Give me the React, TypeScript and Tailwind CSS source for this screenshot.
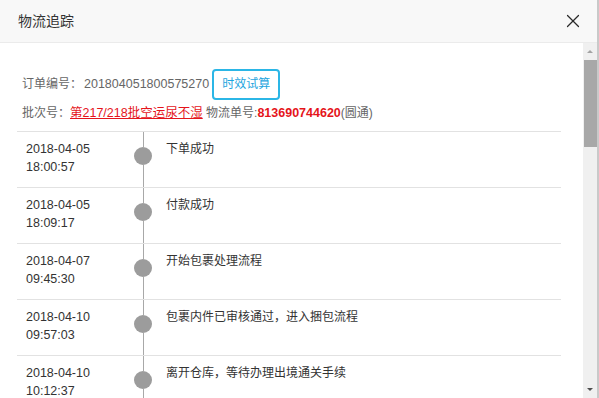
import { X } from "lucide-react";

interface TrackItem {
  date: string;
  time: string;
  text: string;
}

const items: TrackItem[] = [
  { date: "2018-04-05", time: "18:00:57", text: "下单成功" },
  { date: "2018-04-05", time: "18:09:17", text: "付款成功" },
  { date: "2018-04-07", time: "09:45:30", text: "开始包裹处理流程" },
  { date: "2018-04-10", time: "09:57:03", text: "包裹内件已审核通过，进入捆包流程" },
  { date: "2018-04-10", time: "10:12:37", text: "离开仓库，等待办理出境通关手续" },
  { date: "2018-04-11", time: "08:30:12", text: "已出库，交由承运商" },
];

const font = "font-['Liberation_Sans','Noto_Sans_CJK_SC',sans-serif]";

export default function App() {
  return (
    <div className={`w-[599px] h-[398px] bg-white flex flex-col overflow-hidden border-r-2 border-[#c9c9c9] ${font}`}>
      {/* 标题栏 */}
      <div className="h-[43px] shrink-0 bg-[#f8f8f8] border-b border-[#ebebeb] flex items-center justify-between pl-[18px] pr-[13px]">
        <h1 className="text-[14px] text-[#333]">物流追踪</h1>
        <X size={22} strokeWidth={1.3} className="text-[#2a2a2a]" />
      </div>

      <div className="flex-1 min-h-0 flex">
        {/* 内容 */}
        <div className="flex-1 min-w-0 overflow-hidden pl-[17px] pr-[22px] pt-[26px]">
          <div className="h-[30px] flex items-center pl-[5px] text-[12px] text-[#666]">
            <span>订单编号：</span>
            <span className="text-[12.5px] ml-[2px]">201804051800575270</span>
            <button className="ml-[3px] h-[31px] w-[68px] rounded-[4px] border-2 border-[#2bb6e6] text-[12px] text-[#1ea5de] bg-white">
              时效试算
            </button>
          </div>
          <div className="mt-[5px] h-[18px] leading-[18px] pl-[5px] text-[12px] text-[#666] whitespace-nowrap">
            <span>批次号：</span>
            <a className="text-[#e5141b] underline text-[12.5px]">第217/218批空运尿不湿</a>
            <span> 物流单号:</span>
            <span className="text-[#e5141b] font-bold text-[12.5px]">813690744620</span>
            <span>(圆通)</span>
          </div>

          {/* 物流节点 */}
          <div className="mt-[9px]">
            {items.map((it, i) => (
              <div key={i} className="h-[56px] border-t border-[#e2e2e2] flex">
                <div className="w-[117px] shrink-0 pl-[9px] pt-[8px] text-[12.5px] leading-[18px] text-[#333]">
                  <div>{it.date}</div>
                  <div>{it.time}</div>
                </div>
                <div className="w-[18px] shrink-0 flex flex-col items-center">
                  <div className="w-px h-[15px] bg-[#a8a8a8]" />
                  <div className="w-[18px] h-[18px] rounded-full bg-[#9c9c9c]" />
                  <div className="w-px flex-1 bg-[#a8a8a8]" />
                </div>
                <div className="pl-[14px] pt-[8px] text-[12px] leading-[18px] text-[#333]">{it.text}</div>
              </div>
            ))}
          </div>
        </div>

        {/* 滚动条 */}
        <div className="w-[14px] shrink-0 bg-[#f0f0f0] flex flex-col items-center">
          <div className="h-[17px] flex items-center justify-center">
            <div className="w-0 h-0 border-l-[3px] border-r-[3px] border-b-[3px] border-l-transparent border-r-transparent border-b-[#a3a3a3]" />
          </div>
          <div className="w-[13px] h-[87px] bg-[#a8a8a8]" />
          <div className="flex-1" />
          <div className="h-[17px] flex items-center justify-center">
            <div className="w-0 h-0 border-l-[3px] border-r-[3px] border-t-[3px] border-l-transparent border-r-transparent border-t-[#505050]" />
          </div>
        </div>
      </div>
    </div>
  );
}
